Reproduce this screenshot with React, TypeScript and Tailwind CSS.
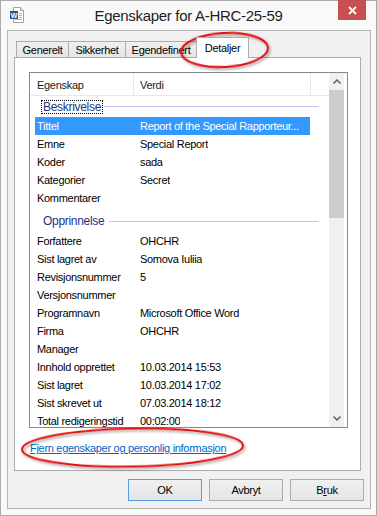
import React from "react";

const groupOne: [string, string][] = [
  ["Tittel", "Report of the Special Rapporteur..."],
  ["Emne", "Special Report"],
  ["Koder", "sada"],
  ["Kategorier", "Secret"],
  ["Kommentarer", ""],
];

const groupTwo: [string, string][] = [
  ["Forfattere", "OHCHR"],
  ["Sist lagret av", "Somova Iuliia"],
  ["Revisjonsnummer", "5"],
  ["Versjonsnummer", ""],
  ["Programnavn", "Microsoft Office Word"],
  ["Firma", "OHCHR"],
  ["Manager", ""],
  ["Innhold opprettet", "10.03.2014 15:53"],
  ["Sist lagret", "10.03.2014 17:02"],
  ["Sist skrevet ut", "07.03.2014 18:12"],
  ["Total redigeringstid", "00:02:00"],
];

function DocIcon() {
  return (
    <svg width="16" height="16" viewBox="0 0 16 16" className="absolute left-[9px] top-[6px]">
      <path d="M3.5 0.5h7l3 3v12h-10z" fill="#fff" stroke="#9aa3ad" />
      <path d="M10.5 0.5v3h3" fill="#e8e8e8" stroke="#9aa3ad" />
      <path d="M9 6.5h3M9 8.5h3M9 10.5h3M5 12.5h7" stroke="#a9b4c4" />
      <rect x="0" y="4" width="8" height="8" fill="#2b5797" />
      <text x="4" y="10.5" fontSize="7" fontWeight="bold" fill="#fff" textAnchor="middle" fontFamily="Liberation Sans, Arial, sans-serif">
        W
      </text>
    </svg>
  );
}

function Row({ label, value, selected }: { label: string; value: string; selected?: boolean }) {
  return (
    <div
      className={`ml-[5px] w-[275px] h-[18px] shrink-0 flex items-center leading-[18px] whitespace-nowrap ${
        selected ? "bg-[#3399ff] text-white" : ""
      }`}
    >
      <span className="w-[105px] pl-[2px] shrink-0">{label}</span>
      <span className="overflow-hidden">{value}</span>
    </div>
  );
}

function Tab({ label, w }: { label: string; w: string }) {
  return (
    <div
      className={`${w} h-[16px] -ml-px first:ml-0 border border-b-0 border-[#acacac] bg-gradient-to-b from-[#f0f0f0] to-[#e5e5e5] flex items-center justify-center pt-[2px]`}
    >
      {label}
    </div>
  );
}

function Button({ children, primary }: { children: React.ReactNode; primary?: boolean }) {
  return (
    <div
      className={`w-[74px] h-[22px] border ${
        primary ? "border-[#569de5]" : "border-[#acacac]"
      } bg-gradient-to-b from-[#f0f0f0] to-[#e5e5e5] flex items-center justify-center`}
    >
      {children}
    </div>
  );
}

export default function App() {
  return (
    <div className="relative w-[377px] h-[516px] font-['Liberation_Sans',Arial,sans-serif] text-[11px] tracking-[-0.3px] text-black">
      <div className="w-full h-full border border-[#aaaaaa] bg-[#f9f9f9] flex flex-col">
        {/* title bar */}
        <div className="h-[29px] shrink-0 relative flex items-center justify-center pt-px">
          <DocIcon />
          <span className="text-[15px] text-[#1e1e1e]">Egenskaper for A-HRC-25-59</span>
          <div className="absolute right-[10px] top-[-1px] w-[28px] h-[20px] bg-[#c75050] flex items-center justify-center">
            <svg width="9" height="9" viewBox="0 0 9 9">
              <path d="M1 1l7 7M8 1l-7 7" stroke="#fff" strokeWidth="1.8" />
            </svg>
          </div>
        </div>

        {/* client area */}
        <div className="ml-[6px] mr-[5px] mb-[6px] flex-1 border border-[#b5b5b5] bg-[#f0f0f0] flex flex-col">
          <div className="pt-[6px] pl-[6px]">
            {/* tabs */}
            <div className="h-[20px] flex items-end pl-[2px]">
              <Tab label="Generelt" w="w-[53px]" />
              <Tab label="Sikkerhet" w="w-[58px]" />
              <Tab label="Egendefinert" w="w-[72px]" />
              <div className="w-[53px] h-[21px] -ml-px -mb-px relative z-10 border border-b-0 border-[#acacac] bg-white flex items-center justify-center">
                Detaljer
              </div>
            </div>

            {/* panel */}
            <div className="w-[347px] h-[414px] border border-[#acacac] bg-white flex flex-col">
              <div className="ml-[14px] mt-[14px] w-[319px] h-[356px] border border-[#828790] flex overflow-hidden">
                <div className="w-[299px] flex flex-col overflow-hidden">
                  <div className="h-[23px] shrink-0 flex border-b border-[#e5e8ef] text-[#1a1a1a]">
                    <div className="w-[104px] pl-[7px] pt-[2px] border-r border-[#e5e8ef] flex items-center">Egenskap</div>
                    <div className="w-[177px] pl-[6px] pt-[2px] border-r border-[#e5e8ef] flex items-center">Verdi</div>
                  </div>

                  <div className="h-[21px] shrink-0 flex items-center pl-[11px] pr-[10px]">
                    <span className="border border-dotted border-black px-px leading-[12px] text-[12px] text-[#1e3287]">
                      Beskrivelse
                    </span>
                    <div className="flex-1 h-px bg-[#b9c6e8] ml-px" />
                  </div>
                  {groupOne.map(([l, v], i) => (
                    <Row key={l} label={l} value={v} selected={i === 0} />
                  ))}

                  <div className="h-[25px] shrink-0 flex items-center pt-[3px] pl-[11px] pr-[10px]">
                    <span className="border border-transparent px-px leading-[12px] text-[12px] text-[#1e3287]">
                      Opprinnelse
                    </span>
                    <div className="flex-1 h-px bg-[#b9c6e8] ml-[3px]" />
                  </div>
                  {groupTwo.map(([l, v]) => (
                    <Row key={l} label={l} value={v} />
                  ))}
                </div>

                {/* scrollbar */}
                <div className="w-[15px] shrink-0 bg-[#f0f0f0] flex flex-col">
                  <div className="h-[17px] flex items-center justify-center">
                    <svg width="8" height="5" viewBox="0 0 8 5">
                      <path d="M0.5 4.5L4 1l3.5 3.5" fill="none" stroke="#606060" strokeWidth="1.5" />
                    </svg>
                  </div>
                  <div className="h-[128px] bg-[#cdcdcd]" />
                  <div className="flex-1" />
                  <div className="h-[17px] flex items-center justify-center">
                    <svg width="8" height="5" viewBox="0 0 8 5">
                      <path d="M0.5 0.5L4 4l3.5-3.5" fill="none" stroke="#606060" strokeWidth="1.5" />
                    </svg>
                  </div>
                </div>
              </div>

              <div className="ml-[15px] mt-[13px] leading-[14px] text-[#0066cc] underline">
                Fjern egenskaper og personlig informasjon
              </div>
            </div>
          </div>

          {/* buttons */}
          <div className="mt-[8px] pr-[6px] flex justify-end gap-[7px]">
            <Button primary>OK</Button>
            <Button>Avbryt</Button>
            <Button>
              B<span className="underline">r</span>uk
            </Button>
          </div>
        </div>
      </div>

      {/* annotation ellipses */}
      <svg width="377" height="516" className="absolute left-0 top-0 pointer-events-none">
        <defs>
          <filter id="sh" x="-20%" y="-50%" width="140%" height="200%">
            <feDropShadow dx="1.5" dy="2" stdDeviation="1.2" floodColor="#000" floodOpacity="0.35" />
          </filter>
        </defs>
        <ellipse cx="224.5" cy="50" rx="43.5" ry="17" fill="none" stroke="#e01010" strokeWidth="2" transform="rotate(-3 224.5 50)" filter="url(#sh)" />
        <ellipse cx="132.5" cy="447.5" rx="110.5" ry="19" fill="none" stroke="#e01010" strokeWidth="2" transform="rotate(-1 132.5 447.5)" filter="url(#sh)" />
      </svg>
    </div>
  );
}
